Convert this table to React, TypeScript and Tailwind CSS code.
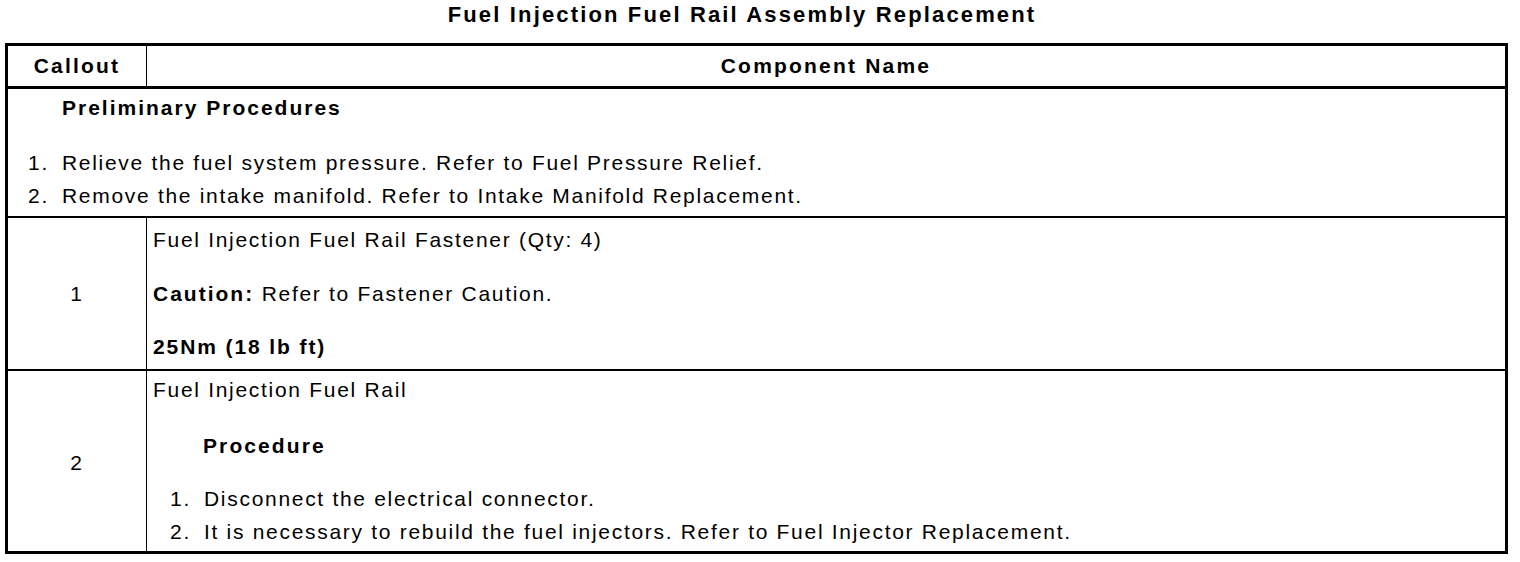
import React from "react";

const prelim = [
  "Relieve the fuel system pressure. Refer to Fuel Pressure Relief.",
  "Remove the intake manifold. Refer to Intake Manifold Replacement.",
];

const railSteps = [
  "Disconnect the electrical connector.",
  "It is necessary to rebuild the fuel injectors. Refer to Fuel Injector Replacement.",
];

function Steps({ items, numLeft }: { items: string[]; numLeft: string }) {
  return (
    <ol>
      {items.map((text, i) => (
        <li key={i} className={`flex leading-[33px] ${numLeft}`}>
          <span className="w-[34px] shrink-0">{i + 1}.</span>
          <span>{text}</span>
        </li>
      ))}
    </ol>
  );
}

export default function App() {
  return (
    <main className="bg-white text-black min-h-[562px] font-['Liberation_Sans',Arial,sans-serif] text-[21px] tracking-[1.7px]">
      <h1 className="text-center font-bold text-[22px] leading-[30px] tracking-[2.15px] pr-[36px]">
        Fuel Injection Fuel Rail Assembly Replacement
      </h1>
      <div className="ml-[5px] mt-[13px] w-[1503px] border-[3px] border-black">
        {/* header */}
        <div className="flex h-[43px] border-b-[3px] border-black font-bold tracking-[2.2px]">
          <div className="w-[139px] shrink-0 border-r border-black flex items-center justify-center">
            Callout
          </div>
          <div className="flex-1 flex items-center justify-center">Component Name</div>
        </div>

        {/* preliminary */}
        <div className="border-b-2 border-black pt-[2px] pb-[4px]">
          <p className="pl-[54px] font-bold tracking-[2px] leading-[33px]">Preliminary Procedures</p>
          <div className="mt-[22px]">
            <Steps items={prelim} numLeft="pl-[20px]" />
          </div>
        </div>

        {/* row 1 */}
        <div className="flex border-b-2 border-black">
          <div className="w-[139px] shrink-0 border-r border-black flex items-center justify-center">1</div>
          <div className="flex-1 pl-[6px] pt-[5px] pb-[6px] leading-[33px]">
            <p>Fuel Injection Fuel Rail Fastener (Qty: 4)</p>
            <p className="mt-[21px]">
              <span className="font-bold tracking-[2px]">Caution:</span> Refer to Fastener Caution.
            </p>
            <p className="mt-[20px] font-bold tracking-[1.9px]">25Nm (18 lb ft)</p>
          </div>
        </div>

        {/* row 2 */}
        <div className="flex">
          <div className="w-[139px] shrink-0 border-r border-black flex items-center justify-center pt-[4px]">2</div>
          <div className="flex-1 pt-[2px] pb-[3px] leading-[33px]">
            <p className="pl-[6px]">Fuel Injection Fuel Rail</p>
            <p className="mt-[23px] pl-[56px] font-bold tracking-[2.1px]">Procedure</p>
            <div className="mt-[20px]">
              <Steps items={railSteps} numLeft="pl-[23px]" />
            </div>
          </div>
        </div>
      </div>
    </main>
  );
}
